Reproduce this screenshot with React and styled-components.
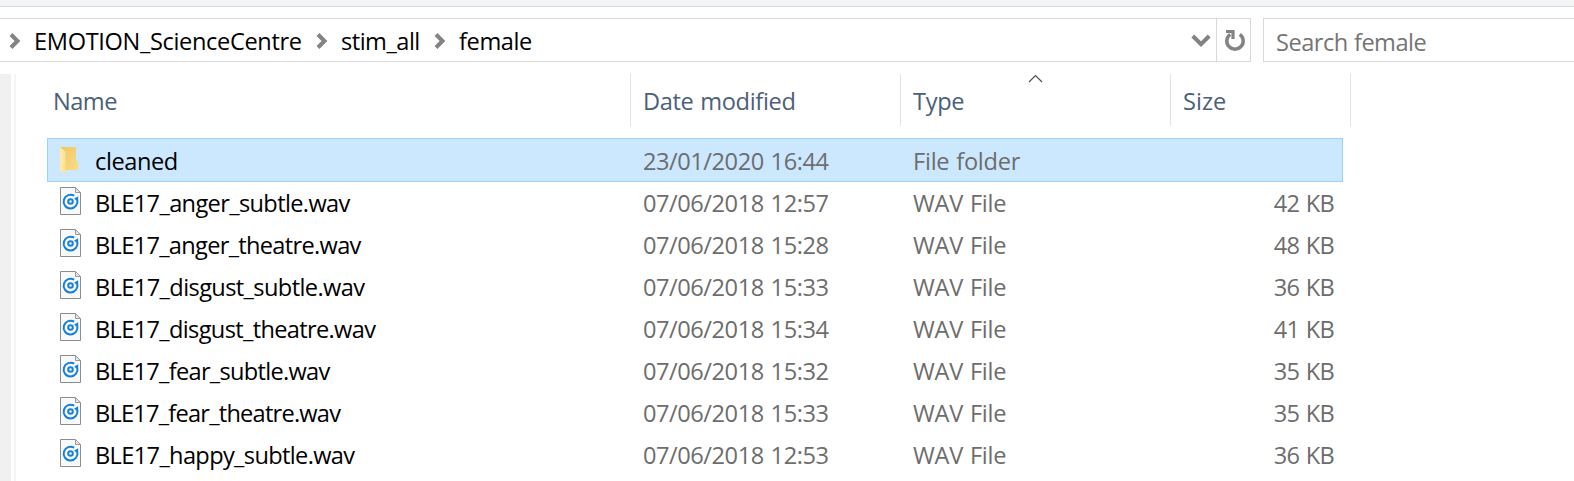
import React from "react";
import styled, { createGlobalStyle } from "styled-components";

const GlobalStyle = createGlobalStyle`
  html, body { margin: 0; height: 100%; background: #fff; overflow: hidden; }
  #root { height: 100%; }
  * { box-sizing: border-box; }
`;

const Window = styled.div`
  display: flex;
  flex-direction: column;
  height: 481px;
  width: 1574px;
  overflow: hidden;
  background: #fff;
  color: #000;
  font: 400 23.6px "Open Sans", "Noto Sans", sans-serif;
  white-space: nowrap;
`;

const RibbonEdge = styled.div`
  flex: none;
  height: 7px;
  background: #f4f5f7;
  border-bottom: 1px solid #d9dadb;
`;

const NavBar = styled.div`
  flex: none;
  display: flex;
  gap: 12px;
  padding: 11px 0 12px;
  height: 67px;
`;

const AddressBar = styled.div`
  display: flex;
  width: 1251px;
  height: 44px;
  border: 1px solid #d9d9d9;
  border-left: 0;
`;

const Crumbs = styled.div`
  flex: 1;
  display: flex;
  padding-left: 9px;
`;

const CrumbArrow = styled.svg`
  flex: none;
  width: 12px;
  height: 16px;
  margin-top: 14px;
`;

const Label = styled.span`
  display: block;
  line-height: 32px;
  letter-spacing: ${(p) => p.$track || 0}px;
  word-spacing: ${(p) => p.$word || 0}px;
`;

const Crumb = styled(Label)`
  width: ${(p) => p.$width}px;
  padding-left: 13px;
  margin-top: 6px;
`;

const BarButton = styled.div`
  display: flex;
  align-items: center;
  justify-content: center;
  width: ${(p) => p.$width}px;
  border-left: ${(p) => (p.$divided ? "1px solid #d9d9d9" : "0")};
`;

const SearchBox = styled.div`
  flex: 1;
  height: 44px;
  padding: 7px 0 0 12px;
  border: 1px solid #d9d9d9;
  border-right: 0;
  color: #757575;
`;

const Body = styled.div`
  flex: 1;
  display: flex;
  min-height: 0;
`;

const ScrollEdge = styled.div`
  width: 16px;
  border-right: 2px solid #f5f5f5;
  background: linear-gradient(to right, #f0f0f0 11px, #fff 11px);
`;

const FileList = styled.div`
  width: 1335px;
`;

const Header = styled.div`
  display: flex;
  height: 52px;
  margin-bottom: 13px;
  color: #4c607a;
`;

const HeaderCell = styled.div`
  position: relative;
  width: ${(p) => p.$width}px;
  padding: ${(p) => `11px 0 0 ${p.$pad}px`};
  border-right: 1px solid #e2e2e2;
`;

const SortMark = styled.svg`
  position: absolute;
  top: 0;
  left: 127px;
  width: 15px;
  height: 9px;
`;

const Row = styled.div`
  display: flex;
  width: 1296px;
  height: ${(p) => (p.$selected ? 44 : 42)}px;
  margin: ${(p) => (p.$selected ? "-1px 0 -1px 31px" : "0 0 0 31px")};
  padding: ${(p) => (p.$selected ? "0" : "0 1px")};
  border: ${(p) => (p.$selected ? "1px solid #99d1ff" : "0")};
  background: ${(p) => (p.$selected ? "#cce8ff" : "transparent")};
`;

const IconCell = styled.div`
  width: 47px;
  padding: 6px 0 0 11px;
`;

const NameCell = styled.div`
  width: 548px;
  padding-top: 6px;
`;

const InfoCell = styled.div`
  width: 270px;
  padding-top: 6px;
  color: #6d6d6d;
`;

const SizeCell = styled(InfoCell)`
  width: 151px;
  text-align: right;
`;

function Chevron() {
  return (
    <CrumbArrow viewBox="0 0 12 16">
      <path d="M2 1.5 8.5 8 2 14.5" fill="none" stroke="#838383" strokeWidth="4" />
    </CrumbArrow>
  );
}

function FolderIcon() {
  return (
    <svg width="22" height="30" viewBox="0 0 22 30">
      <defs>
        <linearGradient id="folderBack" x1="0" y1="0" x2="1" y2="1">
          <stop offset="0" stopColor="#eec765" />
          <stop offset="1" stopColor="#fbdb83" />
        </linearGradient>
        <linearGradient id="folderFront" x1="0" y1="0" x2="1" y2="0">
          <stop offset="0" stopColor="#ffecb0" />
          <stop offset="1" stopColor="#ffe08c" />
        </linearGradient>
      </defs>
      <path d="M1 2H17V15L19 18V25H1Z" fill="url(#folderBack)" />
      <path d="M1 2 6.5 6.5V29L1 25Z" fill="url(#folderFront)" />
    </svg>
  );
}

function AudioIcon() {
  return (
    <svg width="23" height="29" viewBox="0 0 23 29">
      <path d="M1.5 .5H16.5L21.5 5.5V27.5H1.5Z" fill="#f8f9fa" stroke="#8c8c8c" />
      <path d="M16.5 .5V5.5H21.5Z" fill="#e6e6e6" stroke="#9b9b9b" />
      <path d="M15.2 8.7A6.9 6.9 0 1 0 18.3 13" fill="none" stroke="#1681d8" strokeWidth="2" />
      <path d="M15.2 11.4 19.2 9.3V13.4H17.2Z" fill="#1681d8" />
      <circle cx="11.5" cy="14.5" r="2.3" fill="none" stroke="#1681d8" strokeWidth="2" />
    </svg>
  );
}

const files = [
  { name: "cleaned", track: -0.42, date: "23/01/2020 16:44", type: "File folder", size: "", folder: true },
  { name: "BLE17_anger_subtle.wav", track: -0.64, date: "07/06/2018 12:57", type: "WAV File", size: "42 KB" },
  { name: "BLE17_anger_theatre.wav", track: -0.69, date: "07/06/2018 15:28", type: "WAV File", size: "48 KB" },
  { name: "BLE17_disgust_subtle.wav", track: -0.61, date: "07/06/2018 15:33", type: "WAV File", size: "36 KB" },
  { name: "BLE17_disgust_theatre.wav", track: -0.66, date: "07/06/2018 15:34", type: "WAV File", size: "41 KB" },
  { name: "BLE17_fear_subtle.wav", track: -0.71, date: "07/06/2018 15:32", type: "WAV File", size: "35 KB" },
  { name: "BLE17_fear_theatre.wav", track: -0.77, date: "07/06/2018 15:33", type: "WAV File", size: "35 KB" },
  { name: "BLE17_happy_subtle.wav", track: -0.65, date: "07/06/2018 12:53", type: "WAV File", size: "36 KB" },
];

export default function App() {
  return (
    <>
      <GlobalStyle />
      <Window>
        <RibbonEdge />
        <NavBar>
          <AddressBar>
            <Crumbs>
              <Chevron />
              <Crumb $width={295} $track={-0.35}>EMOTION_ScienceCentre</Crumb>
              <Chevron />
              <Crumb $width={106} $track={-0.5}>stim_all</Crumb>
              <Chevron />
              <Crumb $width={90} $track={-0.4}>female</Crumb>
            </Crumbs>
            <BarButton $width={30}>
              <svg width="20" height="14" viewBox="0 0 20 14">
                <path d="M1.8 3 10 11.2 18.2 3" fill="none" stroke="#838383" strokeWidth="4" />
              </svg>
            </BarButton>
            <BarButton $width={34} $divided>
              <svg width="25" height="24" viewBox="0 0 25 24">
                <path d="M9.2 6.3A8.2 8.2 0 1 0 18.8 6.3" fill="none" stroke="#838383" strokeWidth="3.5" />
                <path d="M5 3.5H12V11" fill="none" stroke="#838383" strokeWidth="3.2" />
              </svg>
            </BarButton>
          </AddressBar>
          <SearchBox>
            <Label $track={-0.5} $word={0.6}>Search female</Label>
          </SearchBox>
        </NavBar>
        <Body>
          <ScrollEdge />
          <FileList>
            <Header>
              <HeaderCell $width={615} $pad={37}><Label $track={-0.5}>Name</Label></HeaderCell>
              <HeaderCell $width={270} $pad={12}><Label $track={-0.35} $word={1}>Date modified</Label></HeaderCell>
              <HeaderCell $width={270} $pad={12}>
                <Label $track={-0.3}>Type</Label>
                <SortMark viewBox="0 0 15 9">
                  <path d="M1 8 7.5 1.5 14 8" fill="none" stroke="#4d4d4d" strokeWidth="1.2" />
                </SortMark>
              </HeaderCell>
              <HeaderCell $width={180} $pad={12}><Label>Size</Label></HeaderCell>
            </Header>
            {files.map((f) => (
              <Row key={f.name} $selected={f.folder}>
                <IconCell>{f.folder ? <FolderIcon /> : <AudioIcon />}</IconCell>
                <NameCell><Label $track={f.track}>{f.name}</Label></NameCell>
                <InfoCell><Label $track={-0.45} $word={1.2}>{f.date}</Label></InfoCell>
                <InfoCell><Label $track={-0.25} $word={1}>{f.type}</Label></InfoCell>
                <SizeCell><Label $track={-0.7} $word={1}>{f.size}</Label></SizeCell>
              </Row>
            ))}
          </FileList>
        </Body>
      </Window>
    </>
  );
}
